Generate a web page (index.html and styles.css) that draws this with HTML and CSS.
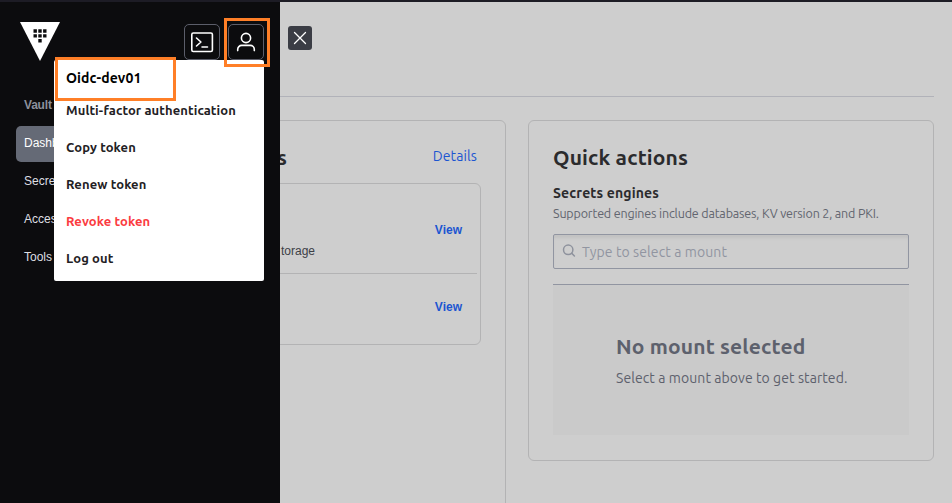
FILE: index.html
```html
<!DOCTYPE html>
<html lang="en">
<head>
<meta charset="utf-8">
<title>Vault</title>
<link rel="stylesheet" href="styles.css">
</head>
<body>
<div class="app">
  <aside class="sidebar">
    <header class="sidebar-header">
      <svg class="logo" width="40" height="39" viewBox="0 0 40 39">
        <path fill="#fff" d="M0 0h40L20 39z"/>
        <path fill="#0c0c0e" d="M13.5 7.3h3.4v3.4h-3.4zM18.3 7.3h3.4v3.4h-3.4zM23.1 7.3h3.4v3.4h-3.4zM13.5 12.2h3.4v3.4h-3.4zM18.3 12.2h3.4v3.4h-3.4zM23.1 12.2h3.4v3.4h-3.4zM18.3 17.1h3.4v3.4h-3.4z"/>
      </svg>
      <div class="tools">
        <button class="tool" aria-label="Console">
          <svg width="24" height="24" viewBox="0 0 24 24" fill="none" stroke="#fff" stroke-width="1.6" stroke-linecap="round" stroke-linejoin="round"><rect x="1.8" y="3" width="20.6" height="18.5" rx="1.5"/><path d="M6.5 8l4.4 4-4.4 4M12 17h5.5"/></svg>
        </button>
        <div class="user">
          <button class="tool" aria-label="User">
            <svg width="24" height="24" viewBox="0 0 24 24" fill="none" stroke="#fff" stroke-width="1.6" stroke-linecap="round"><circle cx="12" cy="8" r="4.6"/><path d="M3.7 20.6v-1.2a4 4 0 0 1 4-4h8.6a4 4 0 0 1 4 4v1.2"/></svg>
          </button>
          <ul class="menu">
            <li class="menu-name">Oidc-dev01</li>
            <li>Multi-factor authentication</li>
            <li>Copy token</li>
            <li>Renew token</li>
            <li class="danger">Revoke token</li>
            <li>Log out</li>
          </ul>
          <div class="mark mark-user"></div>
          <div class="mark mark-name"></div>
        </div>
      </div>
    </header>
    <nav class="nav">
      <h4>Vault</h4>
      <a class="active">Dashboard</a>
      <a>Secrets</a>
      <a>Access</a>
      <a>Tools</a>
    </nav>
  </aside>
  <main class="main">
    <div class="page-header">
      <button class="close" aria-label="Close">
        <svg width="14" height="14" viewBox="0 0 14 14" stroke="#fff" stroke-width="1.3" stroke-linecap="round"><path d="M1.5 1.5l11 11M12.5 1.5l-11 11"/></svg>
      </button>
    </div>
    <div class="columns">
      <section class="card engines">
        <div class="card-head"><h2>s</h2><a>Details</a></div>
        <div class="list">
          <div class="row first"><p>torage</p><a>View</a></div>
          <div class="row second"><a>View</a></div>
        </div>
      </section>
      <section class="card quick">
        <h2>Quick actions</h2>
        <h3>Secrets engines</h3>
        <p class="help">Supported engines include databases, KV version 2, and PKI.</p>
        <div class="search">
          <svg width="14" height="14" viewBox="0 0 14 14" fill="none" stroke="#8e929d" stroke-width="1.5" stroke-linecap="round"><circle cx="6.2" cy="5.8" r="4.7"/><path d="M9.8 9.4l2.6 2.6"/></svg>
          <span>Type to select a mount</span>
        </div>
        <div class="empty">
          <h2>No mount selected</h2>
          <p>Select a mount above to get started.</p>
        </div>
      </section>
    </div>
  </main>
</div>
</body>
</html>
```
FILE: styles.css
```css
* { box-sizing: border-box; }
body, h2, h3, h4, p, ul { margin: 0; padding: 0; }
body {
  font-family: "Ubuntu", "Noto Sans", sans-serif;
  color: #2b2b2d;
  background: #cecece;
  overflow: hidden;
}
button { padding: 0; font: inherit; }
.app { display: flex; height: 503px; border-top: 2px solid #1d1c25; }

.sidebar { width: 280px; flex: none; background: #0c0c0e; position: relative; z-index: 1; }
.sidebar-header { display: flex; justify-content: space-between; padding: 20px 16px 0 20px; height: 84px; }
.tools { display: flex; gap: 8px; margin-top: 2px; }
.tool {
  display: flex; align-items: center; justify-content: center;
  width: 36px; height: 36px;
  border: 1px solid #5c5e6a; border-radius: 5px; background: #0c0c0e;
}
.user { position: relative; }
.menu {
  position: absolute; top: 36px; right: 0;
  width: 210px; height: 221px;
  background: #fff; border-radius: 2px; list-style: none;
  font-size: 13px; font-weight: 700; color: #1f2124; letter-spacing: 0.1px;
  white-space: nowrap;
}
.menu li { height: 37px; line-height: 37px; padding-left: 12px; }
.menu .menu-name { height: 32px; line-height: 36px; font-size: 14px; color: #000; }
.menu .danger { color: #fb3b40; }
.mark { position: absolute; border: 3px solid #ff7f27; }
.mark-user { left: -4px; top: -6px; width: 46px; height: 49px; }
.mark-name { right: 88px; top: 33px; width: 121px; height: 44px; }

.nav { padding: 0 16px; font: 12px/34px "Liberation Sans", sans-serif; color: #dedfe3; }
.nav h4 { height: 40px; padding-left: 8px; line-height: 38px; font-size: 12px; letter-spacing: -0.2px; color: #8c909c; }
.nav a { display: block; height: 36px; margin-bottom: 2px; padding-left: 8px; border-radius: 5px; }
.nav .active { background: #656a76; color: #fff; }

.main { flex: 1; min-width: 0; overflow: hidden; }
.page-header { height: 95px; margin-right: 18px; padding: 24px 0 0 8px; border-bottom: 1px solid #b1b2b9; }
.close {
  display: flex; align-items: center; justify-content: center;
  width: 24px; height: 24px; border: 0; border-radius: 3px; background: #3b3d45;
}
.columns { display: flex; align-items: flex-start; gap: 22px; margin: 23px 18px 0 -24px; }
.card { border: 1px solid #b3b3b4; border-radius: 6px; }
.engines { width: 250px; height: 420px; padding: 24px; }
.card h2 { font-size: 21px; line-height: 26px; letter-spacing: 0.15px; }
.card-head { display: flex; justify-content: space-between; height: 38px; margin-left: -4px; }
.card-head h2 { margin-top: -1px; }
.card-head a { font-size: 14px; line-height: 22px; letter-spacing: 0.12px; margin-right: 4px; color: #1c55d1; }
.list { height: 162px; margin: 0 0 0 -30px; border: 1px solid #b3b3b4; border-radius: 6px; padding-right: 3px; font-family: "Liberation Sans", sans-serif; font-size: 12px; }
.row { display: flex; justify-content: space-between; padding: 0 15px 0 29px; }
.row a { font-weight: 700; color: #1c55d1; margin-left: auto; }
.first { height: 90px; border-bottom: 1px solid #b3b3b4; }
.first p { margin-top: 60px; line-height: 14px; color: #3d4047; }
.first a { margin-top: 39px; line-height: 14px; }
.second a { margin-top: 26px; line-height: 14px; }

.quick { flex: 1; height: 341px; padding: 23px 24px 0; white-space: nowrap; }
.quick h3 { margin-top: 13px; font-size: 14px; line-height: 20px; letter-spacing: 0.15px; }
.help { font-size: 12.5px; line-height: 20px; letter-spacing: -0.16px; color: #62656f; }
.search {
  display: flex; gap: 6px; padding: 0 9px; margin-top: 11px;
  height: 35px; align-items: center;
  border: 1px solid #9195a1; border-radius: 2px;
  box-shadow: inset 0 4px 3px -1px #c2c2c2;
  font-size: 14px; letter-spacing: 0.1px; color: #9195a1;
}
.search svg { margin: -1px 0 0 -1px; }
.empty { height: 151px; margin-top: 15px; padding: 48px 0 0 63px; border-top: 1px solid #9195a1; background: #cacaca; color: #5d616d; }
.empty h2 { letter-spacing: 0.15px; }
.empty p { margin-top: 8px; font-size: 14px; line-height: 22px; letter-spacing: 0.08px; }
```
